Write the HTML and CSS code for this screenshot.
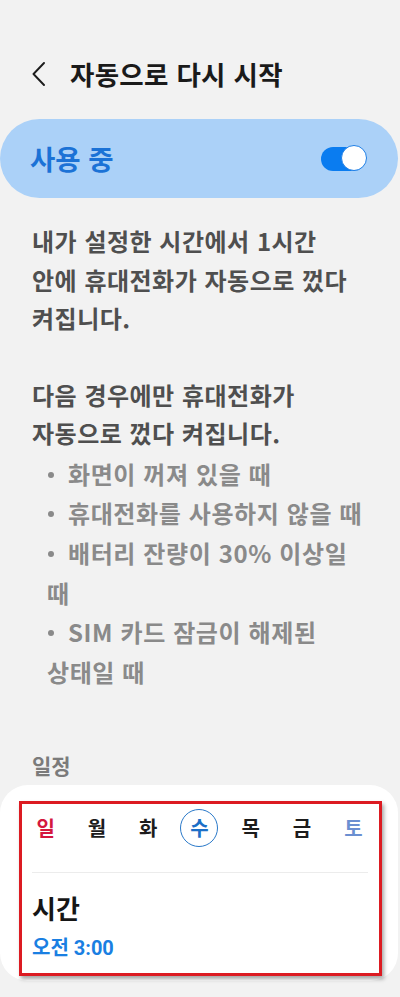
FILE: index.html
```html
<!DOCTYPE html>
<html lang="ko">
<head>
<meta charset="utf-8">
<link rel="stylesheet" href="styles.css">
</head>
<body>
<div class="screen">
  <header class="topbar">
    <svg class="back" width="14" height="24" viewBox="0 0 14 24"><path d="M12 1 L1.5 12 L12 23" fill="none" stroke="#1c1c1c" stroke-width="1.9" stroke-linecap="round" stroke-linejoin="round"/></svg>
    <h1 class="title">자동으로 다시 시작</h1>
  </header>

  <div class="master">
    <span class="master-label">사용 중</span>
    <span class="switch"><span class="knob"></span></span>
  </div>

  <div class="desc">
    <p class="desc-p">내가 설정한 시간에서 1시간<br>안에 휴대전화가 자동으로 껐다<br>켜집니다.</p>
    <p class="desc-p gap">다음 경우에만 휴대전화가<br>자동으로 껐다 켜집니다.</p>
    <ul class="conds">
      <li>화면이 꺼져 있을 때</li>
      <li>휴대전화를 사용하지 않을 때</li>
      <li>배터리 잔량이 30% 이상일<br><span class="wrap">때</span></li>
      <li>SIM 카드 잠금이 해제된<br><span class="wrap">상태일 때</span></li>
    </ul>
  </div>

  <div class="section-title">일정</div>

  <div class="card">
    <div class="highlight">
      <div class="days">
        <span class="day sun">일</span>
        <span class="day">월</span>
        <span class="day">화</span>
        <span class="day"><span class="sel">수</span></span>
        <span class="day">목</span>
        <span class="day">금</span>
        <span class="day sat">토</span>
      </div>
      <div class="divider"></div>
      <div class="time-title">시간</div>
      <div class="time-value">오전 3:00</div>
    </div>
  </div>
</div>
</body>
</html>
```

FILE: styles.css
```css
html, body {
  margin: 0;
  padding: 0;
  background: #f2f2f2;
}
body {
  font-family: "Noto Sans CJK KR", "Noto Sans", sans-serif;
  width: 400px;
  height: 997px;
  overflow: hidden;
}
.screen {
  display: flex;
  flex-direction: column;
}
.topbar {
  display: flex;
  align-items: center;
  height: 48px;
  margin-top: 50px;
  padding-left: 32px;
}
.back {
  display: block;
  flex: none;
}
.title {
  margin: 0 0 0 24px;
  font-size: 26.5px;
  font-weight: 700;
  letter-spacing: 0.3px;
  color: #1a1a1a;
  line-height: 1;
}
.master {
  margin-top: 21px;
  width: 398px;
  height: 79px;
  box-sizing: border-box;
  border-radius: 40px;
  background: #abd1f8;
  display: flex;
  align-items: center;
  justify-content: space-between;
  padding: 0 33px 0 30px;
}
.master-label {
  font-size: 27.5px;
  font-weight: 700;
  color: #1b72d6;
  line-height: 1;
}
.switch {
  position: relative;
  width: 44px;
  height: 24px;
  border-radius: 12px;
  background: #0a7cf0;
}
.knob {
  position: absolute;
  right: -2px;
  top: -2px;
  width: 26px;
  height: 26px;
  box-sizing: border-box;
  border-radius: 50%;
  background: #ffffff;
  border: 1.5px solid #1f7fe6;
}
.desc {
  padding: 0 32px;
  margin-top: 24px;
}
.desc-p {
  margin: 0;
  font-size: 24px;
  font-weight: 700;
  letter-spacing: 0.5px;
  line-height: 38.5px;
  color: #4f4f4f;
  white-space: nowrap;
}
.desc-p.gap {
  margin-top: 38px;
}
.conds {
  list-style: none;
  margin: 1px 0 0 0;
  padding: 0 0 0 15px;
}
.conds li {
  position: relative;
  padding-left: 21px;
  font-size: 24px;
  font-weight: 700;
  letter-spacing: 0.6px;
  line-height: 39.7px;
  color: #8a8a8a;
  white-space: nowrap;
}
.conds li::before {
  content: "";
  position: absolute;
  left: 1px;
  top: 18px;
  width: 6px;
  height: 6px;
  border-radius: 50%;
  background: #8a8a8a;
}
.wrap {
  margin-left: -21px;
}
.section-title {
  margin-top: 61px;
  padding-left: 32px;
  font-size: 21px;
  font-weight: 700;
  color: #7b7b7b;
  line-height: 24px;
}
.card {
  margin-top: 8px;
  width: 398px;
  box-sizing: border-box;
  background: #ffffff;
  border-radius: 28px;
  padding: 16px 16px 5px 19px;
}
.highlight {
  border: 3px solid #dc1b22;
  box-shadow: 2px 3px 4px rgba(0, 0, 0, 0.35);
  padding: 0 0 13px 0;
}
.days {
  display: grid;
  grid-template-columns: repeat(7, 1fr);
  align-items: center;
  height: 48px;
  margin-left: -2px;
}
.day {
  display: flex;
  justify-content: center;
  align-items: center;
  font-size: 20px;
  font-weight: 700;
  color: #1c1c1c;
  line-height: 1;
}
.day.sun { color: #d4173e; }
.day.sat { color: #6b8fd1; }
.sel {
  display: flex;
  justify-content: center;
  align-items: center;
  width: 38px;
  height: 38px;
  box-sizing: border-box;
  border: 1.4px solid #2a79c9;
  border-radius: 50%;
  color: #1c6fc7;
}
.divider {
  margin: 20px 11px 0 10px;
  height: 1px;
  background: #ececec;
}
.time-title {
  margin-top: 20px;
  padding-left: 10px;
  font-size: 26px;
  font-weight: 700;
  color: #161616;
  line-height: 30px;
}
.time-value {
  margin-top: 13px;
  padding-left: 10px;
  font-family: Roboto, "Noto Sans CJK KR", sans-serif;
  font-size: 20px;
  font-weight: 700;
  color: #1a7fe2;
  line-height: 24px;
}
```
